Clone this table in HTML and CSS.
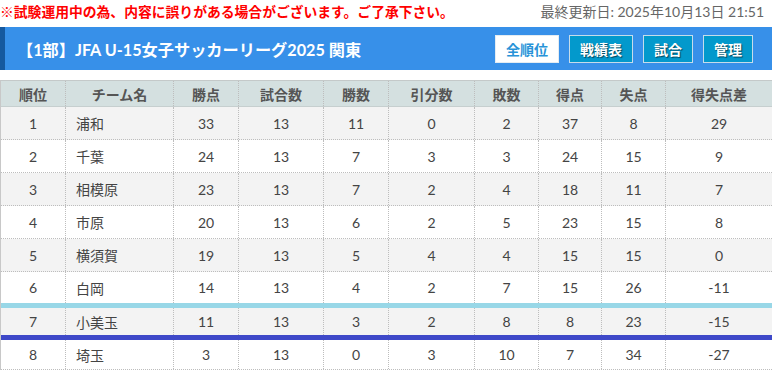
FILE: index.html
```html
<!DOCTYPE html>
<html lang="ja">
<head>
<meta charset="utf-8">
<title>順位表</title>
<link rel="stylesheet" href="styles.css">
</head>
<body>
<div class="notice">
  <span class="warn">※試験運用中の為、内容に誤りがある場合がございます。ご了承下さい。</span>
  <span class="updated">最終更新日: 2025年10月13日 21:51</span>
</div>
<div class="titlebar">
  <h1 class="title">【1部】JFA U-15女子サッカーリーグ2025 関東</h1>
  <nav class="btns">
    <a class="btn btn-active">全順位</a>
    <a class="btn">戦績表</a>
    <a class="btn">試合</a>
    <a class="btn">管理</a>
  </nav>
</div>
<div class="table">
  <div class="row head">
    <div class="c">順位</div><div class="c">チーム名</div><div class="c">勝点</div><div class="c">試合数</div><div class="c">勝数</div><div class="c">引分数</div><div class="c">敗数</div><div class="c">得点</div><div class="c">失点</div><div class="c">得失点差</div>
  </div>
  <div class="row odd">
    <div class="c">1</div><div class="c name">浦和</div><div class="c">33</div><div class="c">13</div><div class="c">11</div><div class="c">0</div><div class="c">2</div><div class="c">37</div><div class="c">8</div><div class="c">29</div>
  </div>
  <div class="row">
    <div class="c">2</div><div class="c name">千葉</div><div class="c">24</div><div class="c">13</div><div class="c">7</div><div class="c">3</div><div class="c">3</div><div class="c">24</div><div class="c">15</div><div class="c">9</div>
  </div>
  <div class="row odd">
    <div class="c">3</div><div class="c name">相模原</div><div class="c">23</div><div class="c">13</div><div class="c">7</div><div class="c">2</div><div class="c">4</div><div class="c">18</div><div class="c">11</div><div class="c">7</div>
  </div>
  <div class="row">
    <div class="c">4</div><div class="c name">市原</div><div class="c">20</div><div class="c">13</div><div class="c">6</div><div class="c">2</div><div class="c">5</div><div class="c">23</div><div class="c">15</div><div class="c">8</div>
  </div>
  <div class="row odd">
    <div class="c">5</div><div class="c name">横須賀</div><div class="c">19</div><div class="c">13</div><div class="c">5</div><div class="c">4</div><div class="c">4</div><div class="c">15</div><div class="c">15</div><div class="c">0</div>
  </div>
  <div class="row line-light">
    <div class="c">6</div><div class="c name">白岡</div><div class="c">14</div><div class="c">13</div><div class="c">4</div><div class="c">2</div><div class="c">7</div><div class="c">15</div><div class="c">26</div><div class="c">-11</div>
  </div>
  <div class="row odd line-dark">
    <div class="c">7</div><div class="c name">小美玉</div><div class="c">11</div><div class="c">13</div><div class="c">3</div><div class="c">2</div><div class="c">8</div><div class="c">8</div><div class="c">23</div><div class="c">-15</div>
  </div>
  <div class="row last">
    <div class="c">8</div><div class="c name">埼玉</div><div class="c">3</div><div class="c">13</div><div class="c">0</div><div class="c">3</div><div class="c">10</div><div class="c">7</div><div class="c">34</div><div class="c">-27</div>
  </div>
</div>
</body>
</html>
```
FILE: styles.css
```css
* { box-sizing: border-box; }
html, body { margin: 0; padding: 0; background: #fff; }
body {
  font-family: "Lato", "Noto Sans CJK JP", sans-serif;
  color: #444;
  width: 772px;
}
.notice {
  height: 27px;
  display: flex;
  justify-content: space-between;
  align-items: flex-start;
  padding: 2px 8px 0 0;
  line-height: 20px;
}
.warn {
  color: #f00;
  font-weight: bold;
  font-size: 13.8px;
}
.updated {
  color: #666;
  font-size: 14px;
}
.titlebar {
  height: 43px;
  background: #3790e9;
  border-left: 5px solid #15599f;
  display: flex;
  align-items: center;
  justify-content: space-between;
  padding: 0 19px 0 12px;
}
.title {
  margin: 0;
  color: #fff;
  font-size: 16.2px;
  font-weight: bold;
}
.btns {
  display: flex;
  gap: 10px;
}
.btn {
  display: flex;
  align-items: center;
  justify-content: center;
  height: 28px;
  padding: 0 10px;
  background: #0399cc;
  border: 1px solid #c6dcea;
  color: #fff;
  font-size: 14px;
  font-weight: bold;
  text-shadow: 1px 1px 1px rgba(0, 0, 0, 0.55);
}
.btn-active {
  background: #fff;
  color: #2893d8;
  text-shadow: none;
  border-color: #e4ecf2;
}
.table {
  margin-top: 10px;
  border-top: 1px solid #c4c9c9;
  border-left: 1px solid #c8c8c8;
}
.row {
  display: grid;
  grid-template-columns: 64px 108px 65px 85px 65px 86px 64px 63px 64px 1fr;
  height: 33px;
  border-bottom: 1px dotted #bdbdbd;
  font-size: 14px;
}
.row.odd { background: #f3f3f3; }
.row.head {
  height: 26px;
  background: #d4e0e0;
  border-bottom: 1px solid #c6cfcf;
  font-weight: bold;
  color: #555;
}
.row.line-light {
  height: 36px;
  border-bottom: 5px solid #98d7e7;
}
.row.line-dark {
  height: 32px;
  border-bottom: 5px solid #3e48c8;
}
.row.last { height: 30px; }
.c {
  display: flex;
  align-items: center;
  justify-content: center;
  border-left: 1px dotted #bdbdbd;
}
.c:first-child { border-left: none; }
.c.name {
  justify-content: flex-start;
  padding-left: 10px;
}
.row.head .c.name { justify-content: center; padding-left: 0; }
```
